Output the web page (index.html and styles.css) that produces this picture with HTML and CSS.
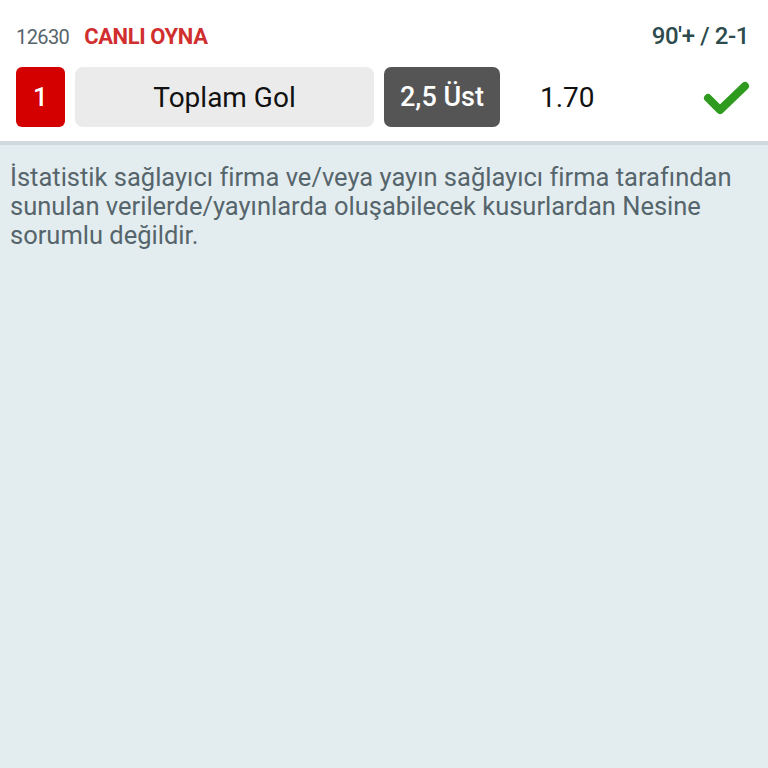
FILE: index.html
```html
<!DOCTYPE html>
<html lang="tr">

<head>
    <meta charset="UTF-8">
    <meta name="viewport" content="width=device-width, initial-scale=1.0">
    <title>Canlı Oyna</title>
    <link rel="stylesheet" href="styles.css">
</head>

<body>
    <div class="bet-card">
        <div class="bet-top">
            <span class="event-code">12630</span>
            <span class="live-label">CANLI OYNA</span>
            <span class="match-status">90'+ / 2-1</span>
        </div>
        <div class="bet-row">
            <div class="mbs-box">1</div>
            <div class="market-box">Toplam Gol</div>
            <div class="outcome-box">2,5 Üst</div>
            <div class="odd">1.70</div>
            <div class="result-icon">
                <svg width="48" height="40" viewBox="0 0 48 40">
                    <path d="M6 21 L18 33 L43 9" fill="none" stroke="#2e9a1e" stroke-width="8" stroke-linecap="round" stroke-linejoin="round"/>
                </svg>
            </div>
        </div>
    </div>

    <p class="disclaimer">İstatistik sağlayıcı firma ve/veya yayın sağlayıcı firma tarafından sunulan verilerde/yayınlarda oluşabilecek kusurlardan Nesine sorumlu değildir.</p>
</body>
</html>
```

FILE: styles.css
```css
* {
    margin: 0;
    padding: 0;
    box-sizing: border-box;
}

body {
    font-family: Roboto, 'Noto Sans', sans-serif;
    background-color: #e3edf0;
    color: #333;
    height: 100vh;
}

/* Bet card */
.bet-card {
    background-color: #fff;
    padding: 22px 16px 14px 16px;
    border-bottom: 4px solid #cfd8dc;
}

.bet-top {
    display: flex;
    align-items: baseline;
    height: 30px;
}

.event-code {
    font-size: 20px;
    letter-spacing: -0.6px;
    color: #56656b;
    margin-right: 15px;
}

.live-label {
    font-size: 22px;
    font-weight: bold;
    letter-spacing: -0.4px;
    color: #d12f2f;
}

.match-status {
    margin-left: auto;
    margin-right: 3px;
    font-size: 24px;
    font-weight: 500;
    letter-spacing: -0.4px;
    color: #2d4b4d;
}

.bet-row {
    display: flex;
    align-items: center;
    margin-top: 15px;
    height: 60px;
}

.mbs-box {
    width: 49px;
    height: 60px;
    background-color: #d40000;
    color: #fff;
    border-radius: 6px;
    font-size: 26px;
    font-weight: 500;
    display: flex;
    align-items: center;
    justify-content: center;
}

.market-box {
    width: 299px;
    height: 60px;
    margin-left: 10px;
    background-color: #ebebeb;
    border-radius: 8px;
    font-size: 28px;
    color: #111;
    display: flex;
    align-items: center;
    justify-content: center;
}

.outcome-box {
    width: 116px;
    height: 60px;
    margin-left: 10px;
    background-color: #555;
    color: #fff;
    border-radius: 7px;
    font-size: 27px;
    font-weight: 500;
    display: flex;
    align-items: center;
    justify-content: center;
}

.odd {
    margin-left: 40px;
    font-size: 28px;
    color: #111;
}

.result-icon {
    margin-left: auto;
    margin-right: 2px;
    display: flex;
}

/* Disclaimer */
.disclaimer {
    padding: 18px 10px;
    font-size: 25.5px;
    line-height: 29px;
    color: #56656b;
}
```
